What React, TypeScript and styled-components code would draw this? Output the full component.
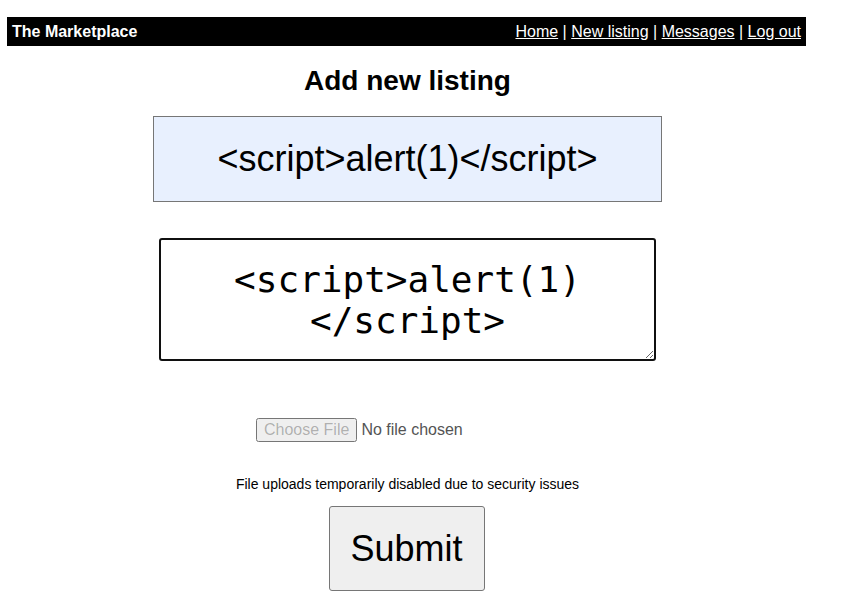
import React, { FC, useEffect, useRef } from 'react';
import styled, { createGlobalStyle } from 'styled-components';

const GlobalStyle = createGlobalStyle`
  body {
    margin: 0;
    padding: 17px 8px 8px 7px;
    background: #fff;
    font-family: 'Liberation Sans', Arial, sans-serif;
    color: #000;
  }
`;

const Page = styled.div`
  width: 799px;
`;

const Header = styled.header`
  display: flex;
  align-items: center;
  justify-content: space-between;
  height: 29px;
  padding: 0 5px;
  background: #000;
  color: #fff;
  font-size: 16px;
`;

const Brand = styled.span`
  font-weight: bold;
`;

const Nav = styled.nav`
  white-space: pre;
`;

const NavLink = styled.a`
  color: #fff;
  text-decoration: underline;
`;

const Form = styled.form`
  display: flex;
  flex-direction: column;
  align-items: center;
  padding-left: 2px;
`;

const Title = styled.h2`
  margin: 19px 0 19px 0;
  font-size: 28px;
  font-weight: bold;
`;

const TitleInput = styled.input`
  box-sizing: border-box;
  width: 509px;
  height: 86px;
  margin: 0;
  padding: 0 10px;
  border: 1px solid #767676;
  background: #e8f0fe;
  font-family: 'Liberation Sans', Arial, sans-serif;
  font-size: 36px;
  text-align: center;
  color: #000;
  outline: none;
`;

const Description = styled.textarea`
  box-sizing: border-box;
  width: 497px;
  height: 123px;
  margin: 36px 0 0 0;
  padding: 19px 18px 15px 18px;
  border: 2px solid #101010;
  border-radius: 3px;
  font-family: 'DejaVu Sans Mono', monospace;
  font-size: 36px;
  text-align: center;
  color: #000;
  outline: none;
`;

const FileInput = styled.input`
  margin: 57px 0 0 0;
  font-family: 'Liberation Sans', Arial, sans-serif;
  font-size: 16px;
`;

const Notice = styled.p`
  margin: 34px 0 0 0;
  font-size: 14px;
`;

const SubmitButton = styled.button`
  box-sizing: border-box;
  margin: 14px 2px 0 0;
  width: 156px;
  height: 85px;
  padding: 0;
  border: 1px solid #767676;
  border-radius: 3px;
  background: #efefef;
  font-family: 'Liberation Sans', Arial, sans-serif;
  font-size: 36px;
  color: #000;
`;

const listingText = '<script>alert(1)</script>';

const App: FC = () => {
  const areaRef = useRef<HTMLTextAreaElement>(null);

  useEffect(() => {
    const el = areaRef.current;
    if (el) {
      el.focus();
      el.setSelectionRange(listingText.length, listingText.length);
    }
  }, []);

  return (
    <Page>
      <GlobalStyle />
      <Header>
        <Brand>The Marketplace</Brand>
        <Nav>
          <NavLink href="#">Home</NavLink> | <NavLink href="#">New listing</NavLink> |{' '}
          <NavLink href="#">Messages</NavLink> | <NavLink href="#">Log out</NavLink>
        </Nav>
      </Header>
      <Form onSubmit={(e) => e.preventDefault()}>
        <Title>Add new listing</Title>
        <TitleInput type="text" defaultValue={listingText} />
        <Description ref={areaRef} defaultValue={listingText} />
        <FileInput type="file" disabled />
        <Notice>File uploads temporarily disabled due to security issues</Notice>
        <SubmitButton type="submit">Submit</SubmitButton>
      </Form>
    </Page>
  );
};

export default App;
